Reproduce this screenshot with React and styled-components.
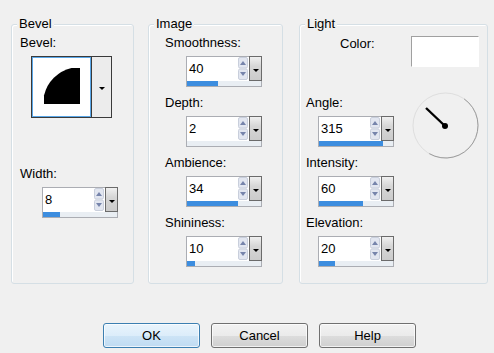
import styled, { createGlobalStyle } from "styled-components";

const GlobalStyle = createGlobalStyle`
  html, body {
    margin: 0;
    padding: 0;
    background: #f0f0f0;
  }
  body {
    font-family: "Liberation Sans", Arial, sans-serif;
    font-size: 13px;
    color: #000;
  }
`;

const imageFields = [
  { label: "Smoothness:", value: "40", fill: 31 },
  { label: "Depth:", value: "2", fill: 0 },
  { label: "Ambience:", value: "34", fill: 51 },
  { label: "Shininess:", value: "10", fill: 8 },
];

const lightFields = [
  { label: "Angle:", value: "315", fill: 64 },
  { label: "Intensity:", value: "60", fill: 44 },
  { label: "Elevation:", value: "20", fill: 16 },
];

function App() {
  return (
    <Page>
      <GlobalStyle />
      <GroupsRow>
        <Group $w={123}>
          <Legend>Bevel</Legend>
          <FieldList $gap={48}>
            <Field>
              <Label $indent={8}>Bevel:</Label>
              <Preview>
                <PreviewCanvas>
                  <svg width="57" height="58" viewBox="0 0 57 58">
                    <path d="M47 46 H11 V37.5 A37 37 0 0 1 38.5 10 H47 Z" fill="#000" />
                  </svg>
                </PreviewCanvas>
                <PreviewDrop>
                  <DownArrow />
                </PreviewDrop>
              </Preview>
            </Field>
            <Field>
              <Label $indent={8}>Width:</Label>
              <Spin value="8" fill={17} indent={30} />
            </Field>
          </FieldList>
        </Group>

        <Group $w={135} $ml={14}>
          <Legend>Image</Legend>
          <FieldList $gap={8}>
            {imageFields.map((f) => (
              <Field key={f.label}>
                <Label $indent={16}>{f.label}</Label>
                <Spin value={f.value} fill={f.fill} indent={37} />
              </Field>
            ))}
          </FieldList>
        </Group>

        <Group $w={189} $ml={16}>
          <Legend>Light</Legend>
          <ColorRow>
            <ColorLabel>Color:</ColorLabel>
            <Swatch />
          </ColorRow>
          <LightLower>
            <FieldList $gap={8} $pt={3}>
              {lightFields.map((f) => (
                <Field key={f.label}>
                  <Label $indent={6}>{f.label}</Label>
                  <Spin value={f.value} fill={f.fill} indent={18} />
                </Field>
              ))}
            </FieldList>
            <Dial>
              <svg width="67" height="67" viewBox="0 0 67 67">
                <circle cx="33.5" cy="33.5" r="32.5" fill="none" stroke="#dedede" strokeWidth="1" />
                <path
                  d="M52.14 6.88 A32.5 32.5 0 0 1 17.25 61.65"
                  fill="none"
                  stroke="#9c9c9c"
                  strokeWidth="1"
                />
                <line x1="14" y1="16" x2="33" y2="34" stroke="#000" strokeWidth="2.4" />
                <circle cx="33" cy="34" r="3" fill="#000" />
              </svg>
            </Dial>
          </LightLower>
        </Group>
      </GroupsRow>

      <ButtonRow>
        <Button $primary>OK</Button>
        <Button>Cancel</Button>
        <Button>Help</Button>
      </ButtonRow>
    </Page>
  );
}

function Spin({ value, fill, indent }) {
  return (
    <SpinWrap $indent={indent}>
      <SpinTop>
        <SpinValue>{value}</SpinValue>
        <SpinArrows>
          <svg width="10" height="23" viewBox="0 0 10 23">
            <rect x="0.5" y="0.5" width="9" height="10.5" rx="1.5" fill="#e2e6f0" stroke="#c9cfdc" />
            <path d="M2 8 H8 L5 4 Z" fill="#7684ab" />
            <rect x="0.5" y="12" width="9" height="10.5" rx="1.5" fill="#e2e6f0" stroke="#c9cfdc" />
            <path d="M2 15 H8 L5 19 Z" fill="#7684ab" />
          </svg>
        </SpinArrows>
        <SpinDrop>
          <DownArrow />
        </SpinDrop>
      </SpinTop>
      <Bar>
        <BarFill style={{ width: `${fill}px` }} />
      </Bar>
    </SpinWrap>
  );
}

export default App;

const Page = styled.div`
  width: 494px;
  height: 353px;
  overflow: hidden;
  display: flex;
  flex-direction: column;
`;

const GroupsRow = styled.div`
  display: flex;
  padding: 24px 0 0 11px;
`;

const Group = styled.div`
  position: relative;
  box-sizing: border-box;
  width: ${(p) => p.$w}px;
  height: 260px;
  margin-left: ${(p) => p.$ml || 0}px;
  padding-top: 10px;
  border: 1px solid #d5dfe5;
  border-radius: 3px;
  box-shadow: inset 1px 1px 0 #fff;
`;

const Legend = styled.span`
  position: absolute;
  top: -9px;
  left: 5px;
  padding: 0 2px;
  background: #f0f0f0;
  line-height: 15px;
`;

const FieldList = styled.div`
  display: flex;
  flex-direction: column;
  gap: ${(p) => p.$gap}px;
  padding-top: ${(p) => p.$pt || 0}px;
`;

const Field = styled.div`
  display: flex;
  flex-direction: column;
  align-items: flex-start;
`;

const Label = styled.div`
  line-height: 15px;
  margin-left: ${(p) => p.$indent}px;
  white-space: nowrap;
`;

const Preview = styled.div`
  display: flex;
  box-sizing: border-box;
  width: 81px;
  height: 62px;
  margin: 6px 0 0 19px;
  border: 1px solid #3a3a3a;
`;

const PreviewCanvas = styled.div`
  box-sizing: border-box;
  width: 59px;
  height: 60px;
  border: 1px solid #5aa7e8;
  background: #fff;
  display: flex;
`;

const PreviewDrop = styled.div`
  flex: 1;
  border-left: 1px solid #3a3a3a;
  background: #ececec;
  display: flex;
  align-items: center;
  justify-content: center;
  padding-top: 2px;
`;

const DownArrow = styled.span`
  width: 0;
  height: 0;
  border-left: 3px solid transparent;
  border-right: 3px solid transparent;
  border-top: 3px solid #000;
`;

const SpinWrap = styled.div`
  box-sizing: border-box;
  width: 76px;
  height: 31px;
  margin: 6px 0 0 ${(p) => p.$indent}px;
  border: 1px solid #abadb3;
  background: #fff;
  display: flex;
  flex-direction: column;
`;

const SpinTop = styled.div`
  display: flex;
  height: 23px;
`;

const SpinValue = styled.div`
  flex: 1;
  padding-left: 2px;
  line-height: 23px;
`;

const SpinArrows = styled.div`
  width: 10px;
  margin-right: 1px;
  display: flex;
`;

const SpinDrop = styled.div`
  box-sizing: border-box;
  width: 13px;
  height: 25px;
  margin: -1px -1px 0 0;
  border: 1px solid #6b6b6b;
  background: linear-gradient(#f0f0f0, #d6d6d6 40%, #cbcbcb);
  display: flex;
  align-items: center;
  justify-content: center;
  padding-top: 3px;
`;

const Bar = styled.div`
  height: 5px;
  margin-top: 1px;
  background: #e9eef3;
  display: flex;
`;

const BarFill = styled.div`
  height: 100%;
  background: #3c8ddf;
`;

const ColorRow = styled.div`
  display: flex;
  align-items: flex-start;
  margin-top: 1px;
`;

const ColorLabel = styled.div`
  line-height: 15px;
  margin-left: 40px;
`;

const Swatch = styled.div`
  box-sizing: border-box;
  width: 68px;
  height: 31px;
  margin-left: auto;
  margin-right: 8px;
  background: #fff;
  border-top: 1px solid #a0a0a0;
  border-left: 1px solid #a0a0a0;
  border-right: 1px solid #fff;
  border-bottom: 1px solid #fff;
`;

const LightLower = styled.div`
  display: flex;
  align-items: flex-start;
  margin-top: 25px;
`;

const Dial = styled.div`
  margin-left: auto;
  margin-right: 8px;
  display: flex;
`;

const ButtonRow = styled.div`
  display: flex;
  gap: 11px;
  padding-left: 103px;
  margin-top: 39px;
`;

const Button = styled.button`
  box-sizing: border-box;
  width: 97px;
  height: 25px;
  padding: 0;
  font-family: inherit;
  font-size: 13px;
  color: #000;
  border: 1px solid ${(p) => (p.$primary ? "#3c7fb1" : "#707070")};
  border-radius: 3px;
  background: ${(p) =>
    p.$primary
      ? "linear-gradient(#e9f4fc, #dcedfa 50%, #cde4f6 50%, #bfdbf2)"
      : "linear-gradient(#f2f2f2, #ebebeb 50%, #dddddd 50%, #cfcfcf)"};
  box-shadow: inset 0 0 0 1px rgba(255, 255, 255, 0.7);
`;
